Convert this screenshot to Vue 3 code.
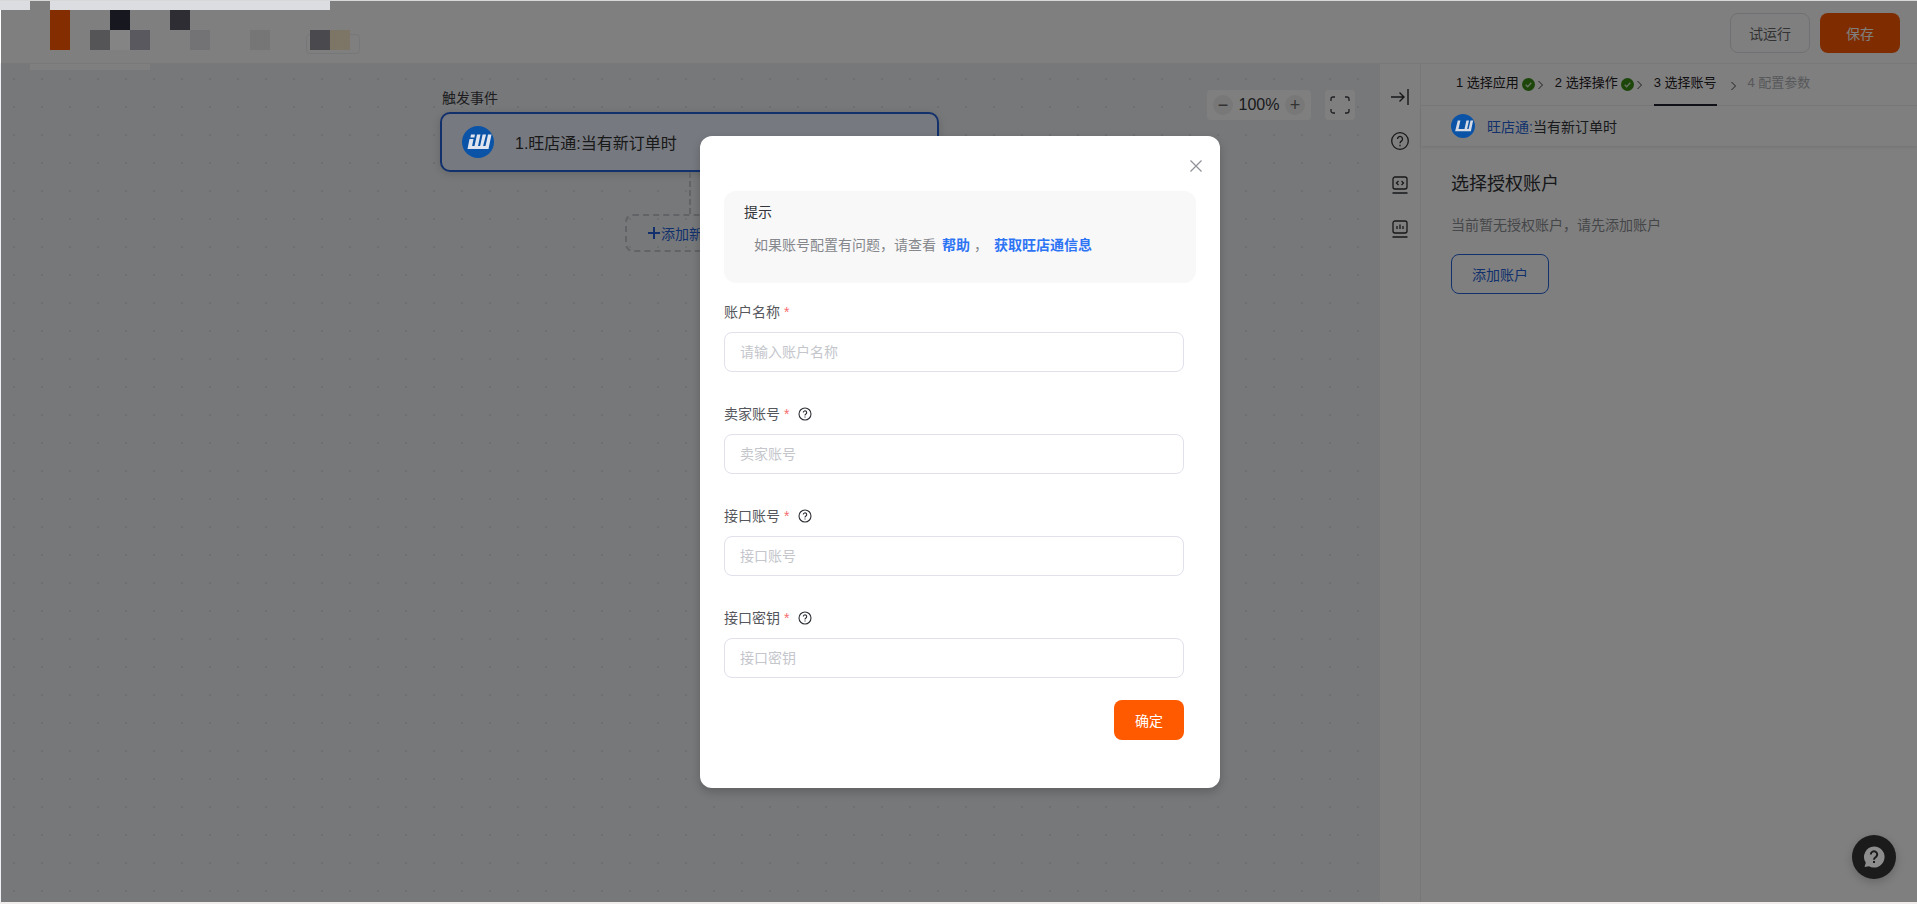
<script setup>
import { ref } from 'vue'

// mosaic over the logo / app name in the header
const mosaic = [
  { col: 2, row: 1, span: 2, color: '#832d00' },
  { col: 5, row: 1, span: 1, color: '#171720' },
  { col: 8, row: 1, span: 1, color: '#2d2d33' },
  { col: 4, row: 2, span: 1, color: '#555558' },
  { col: 5, row: 2, span: 1, color: '#848484' },
  { col: 6, row: 2, span: 1, color: '#59595f' },
  { col: 9, row: 2, span: 1, color: '#737375' },
  { col: 12, row: 2, span: 1, color: '#767676' },
  { col: 15, row: 2, span: 1, color: '#49494e' },
  { col: 16, row: 2, span: 1, color: '#7d7566' }
]

const steps = ref([
  { label: '1 选择应用', done: true },
  { label: '2 选择操作', done: true },
  { label: '3 选择账号', active: true },
  { label: '4 配置参数', muted: true }
])

const fields = [
  { label: '账户名称', placeholder: '请输入账户名称', help: false },
  { label: '卖家账号', placeholder: '卖家账号', help: true },
  { label: '接口账号', placeholder: '接口账号', help: true },
  { label: '接口密钥', placeholder: '接口密钥', help: true }
]

const logoPath =
  'M9 8.500h4l-.6 3h-4zM7.500 13h4l-1.400 7h8l-.0 0 2.500-11.500h3.500L21.100 20h2.400l2.500-11.500h3.500L26.500 23H5.500zM15 8.500h3.500L16 20h-3.500z'
</script>

<template>
  <div class="page">
    <div class="topline"></div>
    <header class="header">
      <div class="draft-tag"></div>
      <div class="header-actions">
        <button class="btn-run">试运行</button>
        <button class="btn-save">保存</button>
      </div>
    </header>

    <div class="body">
      <main class="canvas">
        <div class="zoom-tools">
          <div class="zoom-box">
            <span class="zoom-btn">−</span>
            <span class="zoom-num">100%</span>
            <span class="zoom-btn">+</span>
          </div>
          <div class="full-btn">
            <svg width="20" height="18" viewBox="0 0 20 18" fill="none" stroke="#3c3e44" stroke-width="1.300">
              <path d="M1 5V3a2 2 0 0 1 2-2h2M15 1h2a2 2 0 0 1 2 2v2M19 13v2a2 2 0 0 1-2 2h-2M5 17H3a2 2 0 0 1-2-2v-2" />
            </svg>
          </div>
        </div>

        <div class="flow">
          <div class="flow-label">触发事件</div>
          <div class="node">
            <svg class="logo" width="32" height="32" viewBox="0 0 32 32">
              <circle cx="16" cy="16" r="16" fill="#0b53a6" />
              <path :d="logoPath" fill="#dfe4ee" />
            </svg>
            <span>1.旺店通:当有新订单时</span>
          </div>
          <div class="connector"></div>
          <div class="add-step">
            <svg width="12" height="12" viewBox="0 0 12 12" stroke="#2563d8" stroke-width="2">
              <path d="M6 0v12M0 6h12" />
            </svg>
            添加新步骤
          </div>
        </div>
      </main>

      <aside class="side-strip">
        <svg width="20" height="20" viewBox="0 0 20 20" fill="none" stroke="#2e2f33" stroke-width="1.4">
          <path d="M1 10h13M9.500 5.500 14 10l-4.500 4.500M18 2v16" />
        </svg>
        <svg width="20" height="20" viewBox="0 0 20 20" fill="none" stroke="#2e2f33" stroke-width="1.3">
          <circle cx="10" cy="10" r="8.300" />
          <path d="M7.500 8a2.500 2.500 0 1 1 3.800 2.100c-.9.600-1.300 1-1.300 2.100" />
          <path d="M10 13.800v1.400" />
        </svg>
        <svg width="20" height="20" viewBox="0 0 20 20" fill="none" stroke="#2e2f33" stroke-width="1.3">
          <rect x="3" y="2" width="14" height="12" rx="2" />
          <path d="M8.500 6 6.500 8l2 2M11.500 6l2 2-2 2M2.500 18h15" />
        </svg>
        <svg width="20" height="20" viewBox="0 0 20 20" fill="none" stroke="#2e2f33" stroke-width="1.3">
          <rect x="3" y="2" width="14" height="12" rx="2" />
          <path d="M7 7v3M10 5.500v4.500M13 7v3M2.500 18h15" />
        </svg>
      </aside>

      <section class="panel">
        <nav class="steps">
          <div
            v-for="step in steps"
            :key="step.label"
            class="step"
            :class="{ active: step.active, muted: step.muted, done: step.done }"
          >
            <span class="step-text">{{ step.label }}</span>
            <svg v-if="step.done" class="check" width="13" height="13" viewBox="0 0 13 13">
              <circle cx="6.500" cy="6.500" r="6.500" fill="#3b8c14" />
              <path d="M3.700 6.700 5.700 8.700 9.300 4.800" fill="none" stroke="#cfe6c4" stroke-width="1.300" />
            </svg>
            <svg v-if="!step.muted" class="chevron" width="5" height="10" viewBox="0 0 5 10" fill="none" stroke="#3e3f42" stroke-width="1">
              <path d="M.5 1l4 4-4 4" />
            </svg>
          </div>
        </nav>
        <div class="app-row">
          <svg class="logo" width="24" height="24" viewBox="0 0 32 32">
            <circle cx="16" cy="16" r="16" fill="#0b53a6" />
            <path d="M9 8.500h3.500L10 20h8l2.500-11.500H24L21.500 20h2l2.500-11.500h3.500L26.500 23H5.500z" fill="#d5dae4" />
          </svg>
          <span><em>旺店通:</em>当有新订单时</span>
        </div>
        <div class="panel-body">
          <h2>选择授权账户</h2>
          <p>当前暂无授权账户，请先添加账户</p>
          <button class="btn-add">添加账户</button>
        </div>
      </section>
    </div>

    <div class="mask">
      <div class="dialog">
        <button class="close" aria-label="close">
          <svg width="14" height="14" viewBox="0 0 14 14" fill="none" stroke="#8f9197" stroke-width="1.200">
            <path d="M1.500 1.500l11 11M12.500 1.500l-11 11" />
          </svg>
        </button>
        <div class="tip">
          <div class="tip-title">提示</div>
          <div class="tip-line">
            如果账号配置有问题，请查看<a class="first">帮助</a><span class="comma">，</span><a>获取旺店通信息</a>
          </div>
        </div>
        <form class="form" @submit.prevent>
          <div v-for="field in fields" :key="field.label" class="item">
            <div class="item-label">
              <span>{{ field.label }}</span>
              <i>*</i>
              <svg v-if="field.help" width="14" height="14" viewBox="0 0 14 14" fill="none" stroke="#2e3036" stroke-width="1.100">
                <circle cx="7" cy="7" r="6" />
                <path d="M5.300 5.600a1.700 1.700 0 1 1 2.600 1.400c-.6.400-.9.700-.9 1.400" />
                <path d="M7 9.500v1" />
              </svg>
            </div>
            <input type="text" :placeholder="field.placeholder" />
          </div>
          <div class="form-foot">
            <button class="btn-ok">确定</button>
          </div>
        </form>
      </div>
    </div>

    <div class="help-fab">
      <svg width="24" height="24" viewBox="0 0 24 24">
        <path d="M12 1.500a10.500 10.500 0 1 1-5 19.700L2.500 22l1.300-4.200A10.500 10.500 0 0 1 12 1.500z" fill="#8d8d8d" />
        <path d="M8.800 9.500a3.200 3.200 0 1 1 5 2.600c-1.100.8-1.800 1.200-1.800 2.600" fill="none" stroke="#1b1b1b" stroke-width="2" />
        <path d="M12 15.900v2" stroke="#1b1b1b" stroke-width="2" />
      </svg>
    </div>

    <div class="mosaic-bar left"></div>
    <div class="mosaic-bar right"></div>
    <div class="mosaic">
      <div
        v-for="cell in mosaic"
        :key="cell.col + '-' + cell.row"
        :style="{
          gridColumn: cell.col,
          gridRow: `${cell.row} / span ${cell.span}`,
          background: cell.color
        }"
      ></div>
    </div>
    <div class="mosaic-under"></div>

    <div class="bottomline"></div>
  </div>
</template>

<style scoped>
.page {
  position: relative;
  width: 1917px;
  height: 904px;
  overflow: hidden;
  display: flex;
  flex-direction: column;
  background: #fff;
  font-family: "Liberation Sans", "Noto Sans CJK SC", sans-serif;
  font-size: 14px;
  color: #1f2024;
}
.topline {
  height: 1px;
  background: #d8d8d8;
  flex: none;
  position: relative;
  z-index: 5;
}
.bottomline {
  height: 2px;
  flex: none;
  background: #f1ecec;
  position: relative;
  z-index: 5;
}

.header {
  height: 63px;
  flex: none;
  position: relative;
  background: #fff;
  display: flex;
  justify-content: flex-end;
  align-items: center;
  padding-right: 17px;
  border-bottom: 1px solid #f2f2f2;
  box-sizing: border-box;
}
.draft-tag {
  position: absolute;
  left: 306px;
  top: 33px;
  width: 54px;
  height: 20px;
  border: 1px solid #eceef2;
  border-radius: 4px;
  box-sizing: border-box;
}
.header-actions {
  display: flex;
  gap: 10px;
  margin-top: 2px;
}
.header-actions button {
  height: 40px;
  border-radius: 8px;
  font-family: inherit;
  font-size: 14px;
}
.btn-run {
  width: 80px;
  background: #fff;
  border: 1px solid #dfe1e6;
  color: #666;
}
.btn-save {
  width: 80px;
  background: #ff5a00;
  border: none;
  color: #fff;
}

.body {
  flex: 1;
  display: flex;
  min-height: 0;
}
.canvas {
  position: relative;
  width: 1380px;
  flex: none;
  background-color: #eef0f4;
  background-image: radial-gradient(circle, #dcdee3 1.2px, transparent 1.4px);
  background-size: 28px 28px;
  background-position: 0 1px;
}
.zoom-tools {
  position: absolute;
  top: 26px;
  left: 1207px;
  display: flex;
  gap: 14px;
}
.zoom-box {
  width: 104px;
  height: 30px;
  background: #fff;
  border-radius: 4px;
  display: flex;
  align-items: center;
  justify-content: space-between;
  padding: 0 6px;
  box-sizing: border-box;
}
.zoom-btn {
  width: 20px;
  height: 20px;
  border-radius: 50%;
  background: #f0f0f2;
  color: #666;
  font-size: 18px;
  line-height: 20px;
  text-align: center;
}
.zoom-num {
  font-size: 16px;
  color: #33353a;
}
.full-btn {
  width: 30px;
  height: 30px;
  background: #fff;
  border-radius: 4px;
  display: flex;
  align-items: center;
  justify-content: center;
}
.flow {
  width: 499px;
  margin-left: 440px;
  padding-top: 23px;
  display: flex;
  flex-direction: column;
  align-items: center;
}
.flow-label {
  align-self: flex-start;
  margin-left: 2px;
  line-height: 22px;
  height: 25px;
  color: #3a3b40;
}
.node {
  width: 100%;
  height: 60px;
  box-sizing: border-box;
  border: 2px solid #2563d8;
  border-radius: 10px;
  background: #edf2ff;
  box-shadow: 0 2px 8px rgba(0, 0, 0, 0.15);
  display: flex;
  align-items: center;
  padding-left: 20px;
  font-size: 16px;
  color: #333;
}
/* the logos keep their colour above the mask */
.logo {
  position: relative;
  z-index: 1;
}
.node .logo {
  margin-right: 21px;
}
.connector {
  width: 0;
  height: 42px;
  border-left: 2px dashed #c4c6cc;
}
.add-step {
  width: 129px;
  height: 38px;
  box-sizing: border-box;
  border: 2px dashed #c4c6cc;
  border-radius: 8px;
  display: flex;
  align-items: center;
  justify-content: center;
  gap: 1px;
  color: #2563d8;
  font-size: 14px;
}

.side-strip {
  width: 40px;
  flex: none;
  background: #fff;
  border-right: 1px solid #efefef;
  display: flex;
  flex-direction: column;
  align-items: center;
  padding-top: 23px;
  gap: 24px;
}
.panel {
  flex: 1;
  background: #fff;
  min-width: 0;
}
.steps {
  height: 41px;
  display: flex;
  padding-left: 35px;
  border-bottom: 1px solid #f0f0f0;
  font-size: 13px;
}
.step {
  display: flex;
  align-items: center;
  height: 41px;
  white-space: nowrap;
  color: #1f2024;
  margin-right: 12px;
}
.step-text {
  position: relative;
  height: 41px;
  line-height: 37px;
}
.step.active .step-text::after {
  content: "";
  position: absolute;
  left: 0;
  right: 0;
  bottom: -1px;
  height: 2px;
  background: #1f2030;
}
.step.active .chevron {
  margin-left: 14px;
  position: relative;
  top: 1px;
}
.step.muted {
  color: #aeb0b5;
  margin-right: 0;
}
.check {
  margin-left: 3px;
}
.check + .chevron {
  margin-left: 3px;
}
.app-row {
  height: 40px;
  display: flex;
  align-items: center;
  gap: 12px;
  padding-left: 30px;
  box-shadow: 0 2px 3px rgba(0, 0, 0, 0.08);
  color: #33353a;
}
.app-row em {
  font-style: normal;
  color: #2563d8;
}
.panel-body {
  padding: 25px 0 0 30px;
}
.panel-body h2 {
  margin: 0;
  font-size: 18px;
  font-weight: 400;
  line-height: 26px;
  color: #2f3035;
}
.panel-body p {
  margin: 17px 0 0;
  line-height: 22px;
  color: #8b8d92;
}
.btn-add {
  margin-top: 18px;
  width: 98px;
  height: 40px;
  background: #fff;
  border: 1px solid #2563d8;
  border-radius: 8px;
  color: #2563d8;
  font-family: inherit;
  font-size: 14px;
}

.mask {
  position: absolute;
  left: 1px;
  right: 0;
  top: 1px;
  bottom: 2px;
  background: rgba(0, 0, 0, 0.5);
  display: flex;
  justify-content: center;
  align-items: flex-start;
  padding-top: 135px;
  padding-left: 2px;
  box-sizing: border-box;
}
.dialog {
  position: relative;
  width: 520px;
  height: 652px;
  box-sizing: border-box;
  padding: 55px 24px 0;
  background: #fff;
  border-radius: 12px;
  box-shadow: 0 4px 10px rgba(0, 0, 0, 0.2);
}
.close {
  position: absolute;
  top: 23px;
  right: 17px;
  padding: 0;
  width: 14px;
  height: 14px;
  border: none;
  background: none;
}
.tip {
  height: 92px;
  background: #f8f8f8;
  border-radius: 12px;
  padding: 10px 20px 0;
  box-sizing: border-box;
}
.tip-title {
  line-height: 22px;
  color: #33353a;
}
.tip-line {
  margin-top: 11px;
  padding-left: 10px;
  line-height: 22px;
  color: #85878c;
  white-space: nowrap;
}
.tip-line a {
  color: #2d74f5;
  font-weight: 700;
}
.tip-line a.first {
  margin-left: 6px;
}
.tip-line .comma {
  margin: 0 6px 0 4px;
}
.form {
  margin-top: 18px;
  width: 460px;
}
.item {
  margin-bottom: 31px;
}
.item:nth-child(4) {
  margin-bottom: 22px;
}
.item-label {
  height: 22px;
  line-height: 22px;
  margin-bottom: 9px;
  display: flex;
  align-items: center;
  color: #55575c;
}
.item-label i {
  font-style: normal;
  color: #f56c6c;
  margin-left: 4px;
  font-size: 14px;
}
.item-label svg {
  margin-left: 9px;
}
.item input {
  display: block;
  width: 100%;
  height: 40px;
  box-sizing: border-box;
  border: 1px solid #e0e1ea;
  border-radius: 8px;
  padding: 0 15px;
  font-family: inherit;
  font-size: 14px;
  outline: none;
}
.item input::placeholder {
  color: #c4c6cc;
}
.form-foot {
  display: flex;
  justify-content: flex-end;
}
.btn-ok {
  width: 70px;
  height: 40px;
  border: none;
  border-radius: 8px;
  background: #ff5a00;
  color: #fff;
  font-family: inherit;
  font-size: 14px;
}

.help-fab {
  position: absolute;
  left: 1852px;
  top: 835px;
  width: 44px;
  height: 44px;
  border-radius: 50%;
  background: #1b1b1b;
  box-shadow: 0 3px 10px rgba(0, 0, 0, 0.2);
  display: flex;
  align-items: center;
  justify-content: center;
}

.mosaic-bar {
  position: absolute;
  top: 1px;
  height: 9px;
  background: #dcdde0;
}
.mosaic-bar.left {
  left: 0;
  width: 30px;
}
.mosaic-bar.right {
  left: 50px;
  width: 280px;
}
.mosaic {
  position: absolute;
  left: 30px;
  top: 10px;
  display: grid;
  grid-template-columns: repeat(16, 20px);
  grid-auto-rows: 20px;
}
.mosaic-under {
  position: absolute;
  left: 30px;
  top: 64px;
  width: 120px;
  height: 6px;
  background: #7f7f7f;
}
</style>

<style>
html,
body {
  margin: 0;
  padding: 0;
  overflow: hidden;
}
</style>
